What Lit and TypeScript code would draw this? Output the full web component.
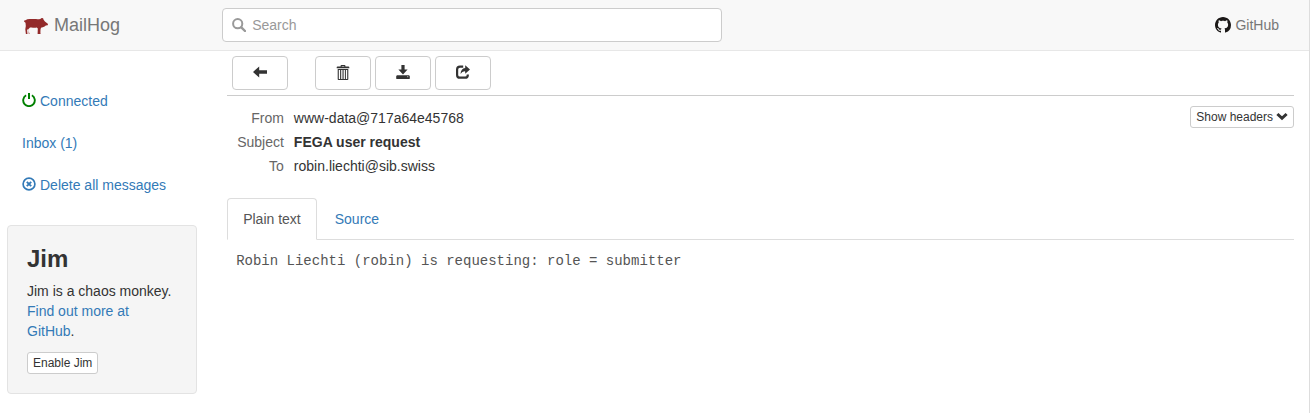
import { LitElement, html, css, svg } from "lit";
import { customElement, property, state } from "lit/decorators.js";

const glyphs: Record<string, unknown> = {
  search: svg`<circle cx="5.7" cy="5.7" r="4.6" fill="none" stroke="currentColor" stroke-width="2"/><path d="M9.3 9.3 13 13" stroke="currentColor" stroke-width="2.4" stroke-linecap="round"/>`,
  back: svg`<path d="M0 7 6.2 1.5v3.8H14v3.4H6.2v3.8z"/>`,
  trash: svg`<path fill-rule="evenodd" d="M4.6 1.5V.8Q4.6 0 5.4 0h3.2q.8 0 .8.8v.7h3q.9 0 .9.8v.9H.7v-.9q0-.8.9-.8zm1.1 0h2.6V1H5.7zM1.7 3.9h10.6v10.3q0 .8-.8.8h-9q-.8 0-.8-.8zm1.1 1v9h1.3v-9zm2.4 0v9h1.3v-9zm2.4 0v9h1.3v-9zm2.3 0v9h1.3v-9z"/>`,
  save: svg`<path d="M5.4 0h3.2v4.5h3L7 9.6 2.4 4.5h3zM.9 10.2h12.2l.7 1v2.4q0 .4-.4.4H.6q-.4 0-.4-.4v-2.4z"/><path d="M11 11.7h1.3" stroke="#fff" stroke-width=".6"/>`,
  share: svg`<path d="M7.2 1.7H4Q1.1 1.7 1.1 4.6v5.3q0 2.800 2.900 2.800h5q2.800 0 2.800-2.800V9.400" fill="none" stroke="currentColor" stroke-width="2.2"/><path d="M9.2.3 14 4.6 9.2 8.8V6.4Q6.4 6 4.5 8.9 4.9 3.5 9.2 2.9z"/>`,
  power: svg`<path d="M4.1 2.3A5.8 5.8 0 1 0 9.9 2.3" fill="none" stroke="currentColor" stroke-width="1.9"/><path d="M6 0h2v6.1H6z"/>`,
  remove: svg`<circle cx="7" cy="7" r="5.9" fill="none" stroke="currentColor" stroke-width="1.7"/><path d="m4.8 4.8 4.4 4.4m0-4.4L4.8 9.2" stroke="currentColor" stroke-width="1.9"/>`,
  down: svg`<path d="m1.4 3 4.6 4.3L10.6 3" fill="none" stroke="currentColor" stroke-width="3"/>`,
};

const glyph = (name: string, box = "0 0 14 14") =>
  html`<svg class="glyph glyph-${name}" viewBox=${box} aria-hidden="true">${glyphs[name]}</svg>`;

const pig = html`<svg class="pig" viewBox="0 0 24 18" aria-hidden="true">
  <path d="M0 5.500Q0 4.200 1.500 4.300 3 3.100 5.500 3.100h6.500q2.400.2 4.300-.2l1.200-.900.5.300 1-.400.6 1.800 1.300 1.900 2.900 2.200q.4 1-.2 1.500l-1.800.3-1.200.9q-1.800.8-3.600 1.300l-.5 1.700-.1 2.900.2 1.500v.2h-3l.2-5.700-1-.900q-2.500.6-5.200 0l-1.600.1-1.400 1.500.3 2.700.6 1.900-.2.500H4.800l-.2-4.500-.6-.900-.9 1.500.4 3.700v.2H1.900l-.6-4.900.5-3.200-.3-3.300z"/>
</svg>`;

const octocat = html`<svg class="octocat" viewBox="0 0 16 16" aria-hidden="true">
  <path d="M8 0C3.58 0 0 3.58 0 8c0 3.54 2.29 6.53 5.47 7.59.4.07.55-.17.55-.38 0-.19-.01-.82-.01-1.49-2.01.37-2.53-.49-2.69-.94-.09-.23-.48-.94-.82-1.13-.28-.15-.68-.52-.01-.53.63-.01 1.08.58 1.23.82.72 1.21 1.87.87 2.33.66.07-.52.28-.87.51-1.07-1.78-.2-3.64-.89-3.64-3.95 0-.87.31-1.59.82-2.15-.08-.2-.36-1.02.08-2.12 0 0 .67-.21 2.2.82.64-.18 1.32-.27 2-.27s1.36.09 2 .27c1.53-1.04 2.2-.82 2.2-.82.44 1.1.16 1.92.08 2.12.51.56.82 1.27.82 2.15 0 3.07-1.87 3.75-3.65 3.95.29.25.54.73.54 1.48 0 1.07-.01 1.93-.01 2.2 0 .21.15.46.55.38A8.01 8.01 0 0 0 16 8c0-4.42-3.58-8-8-8z"/>
</svg>`;

const shared = css`
  * { box-sizing: border-box; }
  a { color: #337ab7; text-decoration: none; }
  svg { fill: currentColor; flex: none; }
  .glyph { width: 14px; height: 14px; }
  button {
    font: inherit;
    color: #333;
    background: #fff;
    border: 1px solid #ccc;
    border-radius: 4px;
    cursor: pointer;
  }
  .small {
    display: inline-flex;
    align-items: center;
    gap: 3px;
    padding: 1px 5px;
    font-size: 12px;
    line-height: 18px;
    border-radius: 3px;
  }
`;

@customElement("mail-navbar")
export class MailNavbar extends LitElement {
  static styles = [shared, css`
    :host { display: block; background: #f8f8f8; border-bottom: 1px solid #e7e7e7; }
    .bar { display: grid; grid-template-columns: 1fr 5fr; align-items: center; height: 50px; }
    .brand { display: flex; align-items: center; gap: 6px; padding-left: 24px; font-size: 18px; color: #777; }
    .pig { width: 24px; height: 18px; color: #932a2a; }
    .rest { display: flex; align-items: center; justify-content: space-between; gap: 16px; padding: 0 30px 0 4px; }
    .search {
      display: flex; align-items: center; gap: 6px;
      flex: 0 1 500px; height: 34px; padding: 0 9px;
      background: #fff; border: 1px solid #ccc; border-radius: 4px; color: #999;
    }
    input { flex: 1; min-width: 0; padding: 0; border: 0; outline: 0; background: none; font: inherit; color: #555; }
    input::placeholder { color: #999; opacity: 1; }
    .github { display: flex; align-items: center; gap: 4px; color: #777; }
    .octocat { width: 16px; height: 16px; color: #1b1817; }
  `];

  render() {
    return html`<nav class="bar">
      <a class="brand" href="#">${pig}<span>MailHog</span></a>
      <div class="rest">
        <label class="search">${glyph("search")}<input type="text" placeholder="Search" aria-label="Search" /></label>
        <a class="github" href="#github">${octocat}<span>GitHub</span></a>
      </div>
    </nav>`;
  }
}

@customElement("mail-sidebar")
export class MailSidebar extends LitElement {
  @property({ type: Number }) count = 1;

  static styles = [shared, css`
    :host { display: block; padding: 30px 21px 0 7px; }
    .links { display: grid; gap: 2px; margin: 0 0 20px; padding: 0; list-style: none; }
    .links a { display: flex; align-items: center; gap: 4px; padding: 10px 15px; }
    .glyph { margin-bottom: 2px; }
    .glyph-power { color: #008000; }
    .well { padding: 19px; background: #f5f5f5; border: 1px solid #e3e3e3; border-radius: 4px; }
    h3 { margin: 0 0 8px; font-size: 24px; line-height: 28px; font-weight: bold; }
    p { margin: 0 0 11px; }
    .small { display: flex; }
  `];

  render() {
    return html`
      <ul class="links">
        <li><a href="#status">${glyph("power")}<span>Connected</span></a></li>
        <li><a href="#inbox">Inbox (${this.count})</a></li>
        <li><a href="#delete">${glyph("remove")}<span>Delete all messages</span></a></li>
      </ul>
      <section class="well">
        <h3>Jim</h3>
        <p>Jim is a chaos monkey.<br /><a href="#jim">Find out more at GitHub</a>.</p>
        <button class="small" type="button">Enable Jim</button>
      </section>`;
  }
}

@customElement("mail-message")
export class MailMessage extends LitElement {
  @state() private tab = "Plain text";

  static styles = [shared, css`
    :host { display: block; padding: 5px 15px 0 9px; min-width: 0; }
    .toolbar { display: flex; gap: 4px; padding: 0 5px 5px; border-bottom: 1px solid #ccc; }
    .toolbar button { display: flex; align-items: center; justify-content: center; width: 56px; height: 34px; padding: 0 0 2px; }
    .toolbar button:first-child { margin-right: 23px; }
    .glyph-trash { height: 15px; }
    .head { display: flex; align-items: flex-start; justify-content: space-between; padding: 10px 0 20px; }
    .fields { display: grid; grid-template-columns: auto 1fr; column-gap: 10px; margin: 0; padding-left: 10px; line-height: 24px; }
    dt { text-align: right; color: #666; }
    dd { margin: 0; }
    .glyph-down { width: 12px; height: 12px; }
    .tabs { display: flex; gap: 2px; border-bottom: 1px solid #ddd; }
    .tabs button {
      margin-bottom: -1px; padding: 10px 15px; line-height: 20px;
      border-color: transparent; border-radius: 4px 4px 0 0; background: none; color: #337ab7;
    }
    .tabs .active { background: #fff; border-color: #ddd #ddd #fff; color: #555; }
    pre {
      margin: 0; padding: 11px 9px; color: #555; white-space: pre-wrap;
      font: 14px/20px "Liberation Mono", "Courier New", monospace;
    }
  `];

  render() {
    return html`
      <div class="toolbar">
        <button type="button" aria-label="Back">${glyph("back")}</button>
        <button type="button" aria-label="Delete">${glyph("trash", "0 0 14 15")}</button>
        <button type="button" aria-label="Download">${glyph("save")}</button>
        <button type="button" aria-label="Release">${glyph("share")}</button>
      </div>
      <div class="head">
        <dl class="fields">
          <dt>From</dt><dd>www-data@717a64e45768</dd>
          <dt>Subject</dt><dd><strong>FEGA user request</strong></dd>
          <dt>To</dt><dd>robin.liechti@sib.swiss</dd>
        </dl>
        <button class="small" type="button"><span>Show headers</span>${glyph("down", "0 0 12 12")}</button>
      </div>
      <div class="tabs" role="tablist">
        ${["Plain text", "Source"].map((name) => html`<button
          type="button" role="tab" aria-selected=${this.tab === name}
          class=${this.tab === name ? "active" : ""}
          @click=${() => (this.tab = name)}>${name}</button>`)}
      </div>
      <pre>Robin Liechti (robin) is requesting: role = submitter</pre>`;
  }
}

@customElement("app-root")
export class AppRoot extends LitElement {
  static styles = css`
    :host {
      display: block;
      box-sizing: border-box;
      min-height: 100vh;
      background: #fff;
      border-right: 1px solid #ddd;
      color: #333;
      font: 14px/20px "Liberation Sans", Arial, sans-serif;
    }
    .page { display: grid; grid-template-columns: minmax(0, 1fr) minmax(0, 5fr); }
  `;

  render() {
    return html`<mail-navbar></mail-navbar>
      <main class="page"><mail-sidebar .count=${1}></mail-sidebar><mail-message></mail-message></main>`;
  }
}
